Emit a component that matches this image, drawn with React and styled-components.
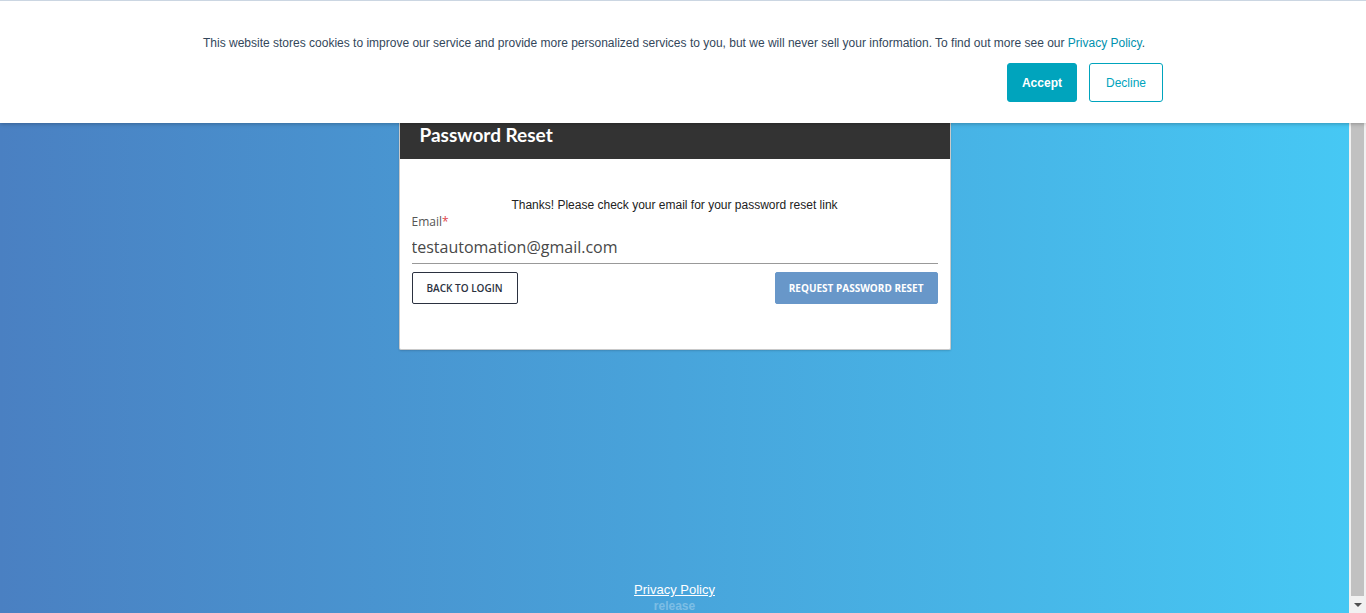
import React from 'react'
import styled, { createGlobalStyle } from 'styled-components'

const GlobalStyle = createGlobalStyle`
  html, body {
    margin: 0;
    padding: 0;
    height: 613px;
    overflow: hidden;
  }
  * {
    box-sizing: border-box;
  }
`

const Page = styled.div`
  display: flex;
  height: 613px;
  position: relative;
  font-family: "Open Sans", "Liberation Sans", sans-serif;
`

const Main = styled.main`
  flex: 1;
  display: flex;
  flex-direction: column;
  align-items: center;
  padding-top: 105px;
  overflow: hidden;
  background: linear-gradient(to right, #4a80c2, #46c8f4);
`

const ScrollBar = styled.div`
  width: 17px;
  display: flex;
  flex-direction: column;
  background: #f1f1f1;
`

const ScrollArrow = styled.div`
  height: 17px;
  display: flex;
  align-items: center;
  justify-content: center;
  svg {
    display: block;
  }
`

const ScrollThumb = styled.div`
  flex: 1;
  margin: 0 2px;
  background: #c1c1c1;
`

const Banner = styled.div`
  position: absolute;
  top: 0;
  left: 0;
  right: 0;
  height: 123px;
  background: #fff;
  border-top: 1px solid #cbd6e2;
  box-shadow: 0 1px 4px rgba(0, 0, 0, 0.25);
  z-index: 5;
  padding-top: 34px;
`

const BannerInner = styled.div`
  width: 960px;
  margin: 0 auto;
  display: flex;
  flex-direction: column;
`

const BannerText = styled.p`
  margin: 0;
  text-align: left;
  font-family: "Liberation Sans", Arial, sans-serif;
  font-size: 12px;
  line-height: 16px;
  color: #33475b;
  a {
    color: #0091ae;
    text-decoration: none;
  }
`

const BannerActions = styled.div`
  display: flex;
  justify-content: flex-end;
  gap: 12px;
  margin-top: 12px;
`

const BannerButton = styled.button`
  height: 39px;
  padding: 0 ${p => (p.$primary ? '14px' : '16px')};
  border-radius: 3px;
  border: 1px solid #00a4bd;
  background: ${p => (p.$primary ? '#00a4bd' : '#fff')};
  color: ${p => (p.$primary ? '#fff' : '#00a4bd')};
  font-family: "Liberation Sans", Arial, sans-serif;
  font-size: 12px;
  font-weight: ${p => (p.$primary ? 700 : 400)};
  cursor: pointer;
`

const Card = styled.div`
  width: 552px;
  background: #fff;
  border: 1px solid #c9c9c9;
  border-top: none;
  border-radius: 2px;
  box-shadow: 0 1px 2px rgba(0, 0, 0, 0.15);
`

const CardHeader = styled.div`
  height: 54px;
  background: #333;
  display: flex;
  align-items: center;
  padding: 4px 20px 0;
`

const CardTitle = styled.h2`
  margin: 0;
  color: #fff;
  font-family: Lato, "Open Sans", sans-serif;
  font-weight: 700;
  font-size: 19px;
`

const CardBody = styled.div`
  padding: 38px 12px 45px;
`

const Message = styled.p`
  margin: 0;
  text-align: center;
  font-family: "Liberation Sans", Arial, sans-serif;
  font-size: 12px;
  line-height: 16px;
  color: #222;
`

const Label = styled.label`
  display: block;
  margin-top: 1px;
  font-size: 12px;
  line-height: 16px;
  color: #555;
  span {
    color: #e0474c;
  }
`

const Input = styled.input`
  display: block;
  width: 100%;
  height: 34px;
  padding: 1px 0 0;
  border: none;
  border-bottom: 1px solid #999;
  outline: none;
  font-family: "Open Sans", sans-serif;
  font-size: 16px;
  color: #484848;
  background: transparent;
`

const Actions = styled.div`
  display: flex;
  justify-content: space-between;
  margin-top: 8px;
`

const Button = styled.button`
  height: 32px;
  padding: 0 ${p => (p.$primary ? '13px' : '14px')};
  border-radius: 2px;
  border: 1px solid ${p => (p.$primary ? '#6897c9' : '#2b3140')};
  background: ${p => (p.$primary ? '#6897c9' : '#fff')};
  color: ${p => (p.$primary ? '#fff' : '#2b3140')};
  font-family: "Open Sans", sans-serif;
  font-size: 10px;
  font-weight: ${p => (p.$primary ? 700 : 600)};
  text-transform: uppercase;
  cursor: pointer;
`

const Footer = styled.footer`
  margin-top: auto;
  margin-bottom: -1px;
  display: flex;
  flex-direction: column;
  align-items: center;
  font-family: "Liberation Sans", Arial, sans-serif;
`

const FooterLink = styled.a`
  color: #fff;
  font-size: 13px;
  line-height: 17px;
  text-decoration: underline;
`

const Release = styled.span`
  color: rgba(255, 255, 255, 0.3);
  font-size: 12px;
  font-weight: 700;
  line-height: 16px;
`

function App() {
  return (
    <>
      <GlobalStyle />
      <Page>
        <Banner>
          <BannerInner>
            <BannerText>
              This website stores cookies to improve our service and provide more personalized services to you, but we will never sell your information. To find out more see our <a href="#">Privacy Policy</a>.
            </BannerText>
            <BannerActions>
              <BannerButton $primary>Accept</BannerButton>
              <BannerButton>Decline</BannerButton>
            </BannerActions>
          </BannerInner>
        </Banner>

        <Main>
          <Card>
            <CardHeader>
              <CardTitle>Password Reset</CardTitle>
            </CardHeader>
            <CardBody>
              <Message>Thanks! Please check your email for your password reset link</Message>
              <Label>Email<span>*</span></Label>
              <Input type='email' defaultValue='testautomation@gmail.com' />
              <Actions>
                <Button>Back to login</Button>
                <Button $primary>Request password reset</Button>
              </Actions>
            </CardBody>
          </Card>
          <Footer>
            <FooterLink href="#">Privacy Policy</FooterLink>
            <Release>release</Release>
          </Footer>
        </Main>

        <ScrollBar>
          <ScrollArrow>
            <svg width="8" height="4" viewBox="0 0 8 4"><path d="M0 4 L4 0 L8 4 Z" fill="#505050" /></svg>
          </ScrollArrow>
          <ScrollThumb />
          <ScrollArrow>
            <svg width="8" height="4" viewBox="0 0 8 4"><path d="M0 0 L8 0 L4 4 Z" fill="#505050" /></svg>
          </ScrollArrow>
        </ScrollBar>
      </Page>
    </>
  )
}

export default App
